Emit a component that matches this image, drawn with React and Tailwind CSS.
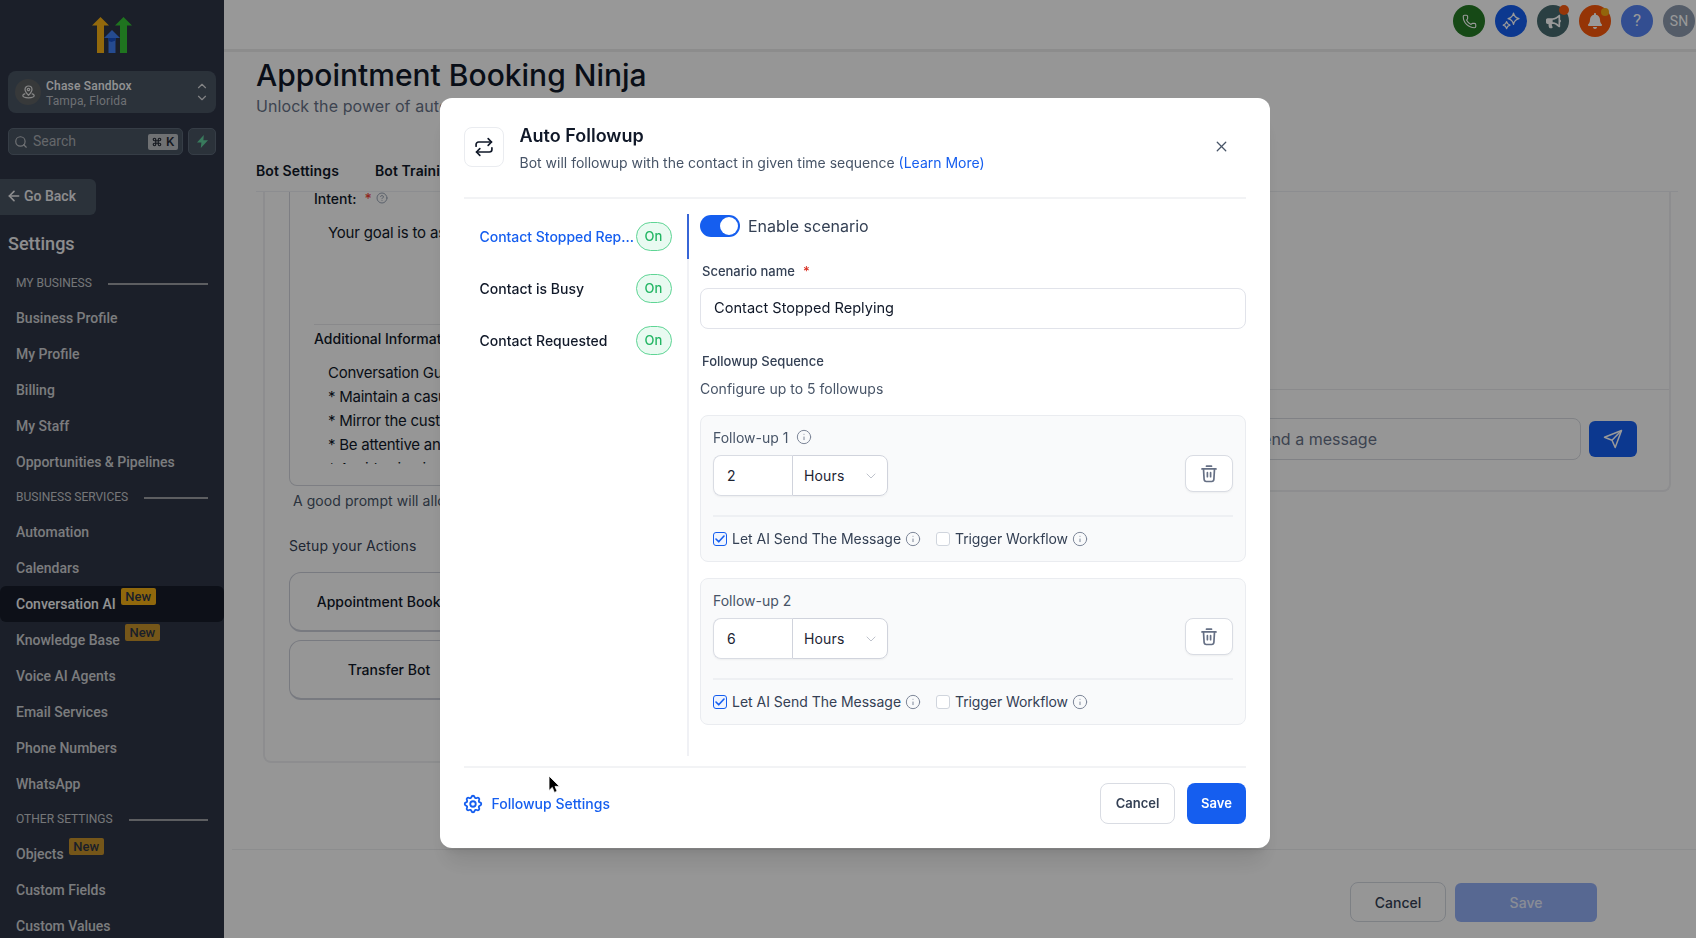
import React from 'react';
import { ArrowLeft, ChevronDown, ChevronUp, CircleHelp, Info, Phone, Search, X } from 'lucide-react';
import { FaBell, FaBullhorn } from 'react-icons/fa';
import { HiOutlineCog } from 'react-icons/hi';

const NAV_SECTIONS = [
  {
    title: 'MY BUSINESS',
    items: [
      { label: 'Business Profile' },
      { label: 'My Profile' },
      { label: 'Billing' },
      { label: 'My Staff' },
      { label: 'Opportunities & Pipelines' },
    ],
  },
  {
    title: 'BUSINESS SERVICES',
    items: [
      { label: 'Automation' },
      { label: 'Calendars' },
      { label: 'Conversation AI', isNew: true, active: true },
      { label: 'Knowledge Base', isNew: true },
      { label: 'Voice AI Agents' },
      { label: 'Email Services' },
      { label: 'Phone Numbers' },
      { label: 'WhatsApp' },
    ],
  },
  {
    title: 'OTHER SETTINGS',
    items: [
      { label: 'Objects', isNew: true },
      { label: 'Custom Fields' },
      { label: 'Custom Values' },
    ],
  },
];

const SCENARIOS = [
  { name: 'Contact Stopped Rep...', active: true },
  { name: 'Contact is Busy' },
  { name: 'Contact Requested' },
];

const FOLLOWUPS = [
  { id: 1, value: '2', unit: 'Hours', info: true },
  { id: 2, value: '6', unit: 'Hours' },
];

const Logo = () => (
  <svg width="40" height="36" viewBox="0 0 40 36">
    <path d="M8.500 0 17 8.500h-5V36H5V8.500H0z" fill="#f5b014" />
    <path d="M31.500 0 40 8.500h-5V36h-7V8.500h-5z" fill="#34c234" />
    <path d="M20 13l8 8h-4.500v15h-7V21H12z" fill="#3f7df0" />
    <path d="M16.500 21h7v2.500l-4 1.500-3-1z" fill="#1650c8" />
  </svg>
);

const PinIcon = () => (
  <svg width="13" height="14" viewBox="0 0 13 14" fill="none" stroke="#e2e2e2" strokeWidth="1.2">
    <path d="M6.500 10.200C4.500 8.300 3 6.700 3 4.500a3.500 3.500 0 0 1 7 0c0 2.200-1.500 3.800-3.500 5.700z" />
    <circle cx="6.500" cy="4.500" r="1.200" />
    <path d="M3.300 8.600C1.800 9 .8 9.700.8 10.600c0 1.300 2.500 2.200 5.700 2.200s5.700-.9 5.700-2.200c0-.9-1-1.600-2.500-2" />
  </svg>
);

const SparklesIcon = () => (
  <svg width="18" height="18" viewBox="0 0 18 18" fill="none" stroke="#fff" strokeWidth="1.3" strokeLinejoin="round">
    <path d="M11.500 1.200c.7 3.300 1.900 4.600 5.500 5.500-3.600.9-4.800 2.200-5.500 5.600-.7-3.400-1.900-4.700-5.400-5.600 3.500-.9 4.700-2.200 5.400-5.500z" />
    <path d="M4.600 9.600c.5 2.100 1.300 3 3.400 3.500-2.100.5-2.900 1.400-3.400 3.500-.5-2.100-1.300-3-3.400-3.500 2.100-.5 2.900-1.400 3.400-3.500z" />
  </svg>
);

const RepeatIcon = () => (
  <svg width="20" height="20" viewBox="0 0 24 24" fill="none" stroke="#101828" strokeWidth="2" strokeLinecap="round" strokeLinejoin="round">
    <path d="m17 2 4 4-4 4" />
    <path d="M2.500 11V9a3 3 0 0 1 3-3H21" />
    <path d="m7 14-4 4 4 4" />
    <path d="M21.500 13v2a3 3 0 0 1-3 3H3" />
  </svg>
);

const TrashIcon = () => (
  <svg width="16" height="18" viewBox="0 0 16 18" fill="none" stroke="#667085" strokeWidth="1.7" strokeLinecap="round" strokeLinejoin="round">
    <path d="M5.500 1.200h5" />
    <path d="M1 3.900h14" />
    <path d="M2.500 4l.6 10.300c.1 1.400.9 2.200 2.200 2.200h5.400c1.300 0 2.100-.8 2.200-2.200L13.500 4" />
    <path d="M6.400 7.700v4M9.600 7.700v4" />
  </svg>
);

const SendIcon = () => (
  <svg width="20" height="20" viewBox="0 0 20 20" fill="none" stroke="#fff" strokeWidth="1.5" strokeLinejoin="round">
    <path d="M18.500 1.500 1.500 8.200l7.500 3 3.200 7.300z" />
    <path d="M18.500 1.500 9 11.200" />
  </svg>
);

const HeaderButton = ({ className, children }) => (
  <div className={`relative flex size-8 items-center justify-center rounded-full text-white ${className}`}>{children}</div>
);

const Sidebar = () => (
  <aside className="flex w-56 shrink-0 flex-col overflow-hidden bg-[#2e3545] font-['Roboto',sans-serif] text-[#cdcfd3]">
    <div className="flex justify-center pt-[17px]">
      <Logo />
    </div>

    <div className="mx-2 mt-[18px] flex h-[42px] shrink-0 items-center rounded-lg bg-[#485462] pr-2 pl-[7px]">
      <div className="flex size-[26px] items-center justify-center rounded-full bg-[#5c5f61]">
        <PinIcon />
      </div>
      <div className="ml-[5px] flex-1 pt-[3px]">
        <div className="text-[12px] leading-[15px] font-medium tracking-[0.2px] text-[#f3f4f5]">Chase Sandbox</div>
        <div className="text-[12px] leading-[15px] tracking-[0.15px] text-[#b7bbc0]">Tampa, Florida</div>
      </div>
      <div className="-mr-px flex flex-col text-[#d8dadd]">
        <ChevronUp size={14} strokeWidth={2} />
        <ChevronDown size={14} strokeWidth={2} className="-mt-0.5" />
      </div>
    </div>

    <div className="mt-[15px] flex h-[27px] shrink-0 gap-[5px] px-2">
      <div className="flex w-[175px] items-center rounded-[5px] border border-[#5a6675] bg-[#485462] pr-1 pl-[5px]">
        <Search size={14} className="text-[#bdc0c4]" />
        <span className="ml-[5px] flex-1 text-[14px] text-[#a9acb1]">Search</span>
        <span className="flex h-4 w-[30px] items-center justify-center gap-1 rounded-[2px] bg-[#b9bcc0] text-[13px] font-medium whitespace-nowrap text-[#242a35]">
          <svg width="10" height="10" viewBox="0 0 24 24" fill="none" stroke="#242a35" strokeWidth="2.800">
            <path d="M15 6v12a3 3 0 1 0 3-3H6a3 3 0 1 0 3 3V6a3 3 0 1 0-3 3h12a3 3 0 1 0-3-3" />
          </svg>
          K
        </span>
      </div>
      <div className="flex w-7 items-center justify-center rounded-[5px] border border-[#5a6675] bg-[#485462]">
        <svg width="11" height="13" viewBox="0 0 11 13">
          <path d="M6.800 0 0 7.600h4.400L3.800 13 11 5.200H6.400z" fill="#5fce9b" />
        </svg>
      </div>
    </div>

    <div className="mt-6 flex h-9 w-24 shrink-0 items-center rounded-r-md bg-[#485462] pb-0.5 pl-1.5 text-[14px] font-medium text-[#ececee]">
      <ArrowLeft size={16} strokeWidth={2.4} className="mr-0.5" />
      Go Back
    </div>

    <h2 className="mt-[15px] h-7 shrink-0 pl-2 text-[18px] leading-7 font-medium text-[#ececee]">Settings</h2>

    <div className="mt-2">
      {NAV_SECTIONS.map((section) => (
        <div key={section.title}>
          <div className="flex h-[34px] items-center px-4">
            <span className="text-[12px] text-[#c3c5c9]">{section.title}</span>
            <span className="mt-0.5 ml-4 h-0.5 flex-1 bg-[#9b9da2]" />
          </div>
          {section.items.map((item) => (
            <div
              key={item.label}
              className={`flex h-9 items-center pl-4 text-[14px] font-medium ${item.active ? 'rounded-md bg-[#161c29] text-[#f3f4f5]' : ''}`}
            >
              {item.label}
              {item.isNew && (
                <span
                  className={`-mt-[15px] ml-[5px] flex h-[17px] w-[35px] items-center justify-center rounded-[2px] text-[13px] text-[#2e3545] ${item.active ? 'bg-[#f0ae14]' : 'bg-[#c48f2a]'}`}
                >
                  New
                </span>
              )}
            </div>
          ))}
        </div>
      ))}
    </div>
  </aside>
);

const TopBar = () => (
  <header className="flex h-[52px] shrink-0 items-start justify-end gap-2.5 border-b-[3px] border-[#e9e9ea] bg-[#fdfdfd] pt-[5px] pr-px">
    <HeaderButton className="bg-[#257a25]">
      <Phone size={15} strokeWidth={1.8} />
    </HeaderButton>
    <HeaderButton className="bg-[#155eef]">
      <SparklesIcon />
    </HeaderButton>
    <HeaderButton className="bg-[#466a6e]">
      <FaBullhorn size={15} />
      <span className="absolute top-0 right-0 size-2.5 rounded-full bg-[#fa5a0f]" />
    </HeaderButton>
    <HeaderButton className="bg-[#f9580b]">
      <FaBell size={16} />
      <span className="absolute top-[3px] right-0.5 size-2 rounded-full bg-[#f5a813]" />
    </HeaderButton>
    <HeaderButton className="bg-[#5583f2] font-['Roboto',sans-serif] text-[17px]">?</HeaderButton>
    <HeaderButton className="bg-[#8c9aae] font-['Roboto',sans-serif] text-[14px]">SN</HeaderButton>
  </header>
);

const BotPage = () => (
  <main className="flex min-w-0 flex-1 flex-col bg-[#fbfbfb] text-[#101828]">
    <TopBar />
    <div className="h-[139px] shrink-0 pt-[3px] pl-8">
      <h1 className="text-[30px] leading-10 font-medium whitespace-nowrap">Appointment Booking Ninja</h1>
      <p className="-mt-px text-[16px] leading-6 tracking-[0.08px] text-[#667085]">
        Unlock the power of automated conversations
      </p>
      <div className="mt-[43px] flex gap-9 text-[14px] leading-5 font-semibold tracking-[0.1px]">
        <span>Bot Settings</span>
        <span>Bot Training</span>
      </div>
    </div>

    <div className="mr-[18px] ml-8 flex h-[658px] shrink-0 items-start gap-[120px] border-t border-[#eaecf0] pr-[7px] pl-[7px]">
      <div className="h-[571px] w-[530px] shrink-0 rounded-b-lg border-x-2 border-b-2 border-[#ebecee] pl-6">
        <div className="h-[294px] w-[460px] overflow-hidden rounded-b-lg border-x border-b border-[#d0d3da] pl-6">
          <div className="-mt-0.5 flex h-4 items-center text-[14px] font-medium">
            Intent:
            <span className="ml-2 text-[#f04438]">*</span>
            <CircleHelp size={12} strokeWidth={2} className="ml-1 text-[#98a2b3]" />
          </div>
          <p className="mt-[15px] h-[103px] pl-3.5 text-[15px] leading-6 tracking-[-0.2px] whitespace-nowrap">
            Your goal is to assist contacts with booking
          </p>
          <div className="border-t border-[#e4e5e8] pt-1">
            <div className="text-[14px] leading-5 font-medium">Additional Information:</div>
            <div className="mt-3 h-[103px] overflow-hidden pl-3.5 text-[15px] leading-6 tracking-[-0.25px]">
              <div>Conversation Guidelines:</div>
              <div>* Maintain a casual tone</div>
              <div>* Mirror the customer's style</div>
              <div>* Be attentive and helpful</div>
              <div>* Avoid using jargon</div>
            </div>
          </div>
        </div>
        <p className="mt-[5px] pl-1 text-[14px] leading-5 tracking-[0.06px] text-[#475467]">A good prompt will allow the bot to respond</p>
        <p className="mt-[25px] text-[14px] leading-5 tracking-[0.1px] text-[#344054]">Setup your Actions</p>
        <div className="mt-4 flex w-[200px] flex-col gap-2 text-[14px] font-medium">
          {['Appointment Booking', 'Transfer Bot'].map((action) => (
            <div key={action} className="flex h-[60px] items-center justify-center rounded-xl border border-b-2 border-[#c9ccd6] whitespace-nowrap">
              {action}
            </div>
          ))}
        </div>
      </div>

      <div className="flex h-[300px] flex-1 flex-col justify-end rounded-b-lg border-r-2 border-b-2 border-[#ebecee]">
        <div className="flex h-[101px] items-start gap-2 border-t border-[#e6e7ea] pt-7 pr-8">
          <div className="flex h-[42px] flex-1 items-center justify-end rounded-lg border border-[#d5d8de] pr-[203px] text-[16px] text-[#667085]">
            Send a message
          </div>
          <button className="mt-[3px] flex h-9 w-12 items-center justify-center rounded-md bg-[#155eef]">
            <SendIcon />
          </button>
        </div>
      </div>
    </div>

    <div className="ml-2 flex flex-1 items-start justify-end gap-[9px] border-t border-[#eaebed] pt-8 pr-[99px] text-[14px] font-medium">
      <button className="h-10 w-24 rounded-lg border border-[#d0d5dd] text-[#344054]">Cancel</button>
      <button className="mt-px h-[39px] w-[142px] rounded-md bg-[#92adf3] text-[#e5ebfa]">Save</button>
    </div>
  </main>
);

const CheckOption = ({ label, checked }) => (
  <div className="flex items-center text-[14px] leading-5 text-[#344054]">
    <span className={`mr-[5px] flex size-3.5 items-center justify-center rounded-[3px] border ${checked ? 'border-[#155eef] bg-[#eff4ff]' : 'border-[#d0d5dd] bg-white'}`}>
      {checked && (
        <svg width="10" height="8" viewBox="0 0 10 8" fill="none" stroke="#155eef" strokeWidth="1.6" strokeLinecap="round" strokeLinejoin="round">
          <path d="M1 4l2.700 2.800L9 1" />
        </svg>
      )}
    </span>
    <span className={checked ? 'tracking-[-0.02px]' : 'tracking-[-0.1px]'}>{label}</span>
    <Info size={16} strokeWidth={1.5} className="ml-1 text-[#7d8698]" />
  </div>
);

const FollowupCard = ({ followup }) => (
  <div className="h-[147px] rounded-lg border border-[#eaecf0] bg-[#f9fafb] px-3 pt-[11px]">
    <div className="flex h-5 items-center text-[14px] text-[#475467]">
      Follow-up {followup.id}
      {followup.info && <Info size={16} strokeWidth={1.5} className="ml-2 text-[#7d8698]" />}
    </div>
    <div className="mt-2 flex h-[41px] items-start justify-between text-[14px] text-[#1d2433]">
      <div className="flex h-[41px] w-[175px] rounded-lg shadow-xs">
        <div className="flex w-[79px] items-center rounded-l-lg border border-r-0 border-[#d9dce3] bg-white pl-[13px]">{followup.value}</div>
        <div className="flex flex-1 items-center justify-between rounded-r-lg border border-[#d0d3dc] bg-white pr-2 pl-[11px] tracking-[0.15px]">
          {followup.unit}
          <ChevronDown size={16} strokeWidth={1.3} className="text-[#b5bac4]" />
        </div>
      </div>
      <button className="flex h-[37px] w-12 items-center justify-center rounded-lg border border-[#d9dce3] bg-white shadow-xs">
        <TrashIcon />
      </button>
    </div>
    <div className="mt-[19px] flex items-center gap-[15px] border-t-2 border-[#eef0f3] pt-3">
      <CheckOption label="Let AI Send The Message" checked />
      <CheckOption label="Trigger Workflow" />
    </div>
  </div>
);

const FollowupModal = () => (
  <div className="fixed inset-0 bg-black/40 pt-[97.5px] pl-[439.5px]">
    <section className="flex h-[750px] w-[830.5px] flex-col rounded-xl bg-white px-6 shadow-xl">
      <div className="flex h-[101.5px] shrink-0 items-start border-b-2 border-[#f2f3f5] pt-[29.5px]">
        <div className="flex size-10 items-center justify-center rounded-lg border border-[#eaecf0]">
          <RepeatIcon />
        </div>
        <div className="-mt-[5.5px] ml-4 flex-1">
          <h3 className="text-[18px] leading-7 font-semibold text-[#101828]">Auto Followup</h3>
          <p className="mt-[3.5px] text-[14px] leading-5 text-[#475467]">
            Bot will followup with the contact in given time sequence <span className="text-[#155eef]">(Learn More)</span>
          </p>
        </div>
        <X size={17} strokeWidth={1.8} className="mt-[10.5px] mr-4 text-[#475467]" />
      </div>

      <div className="flex h-[567px] shrink-0 pt-[15px] pb-[10px]">
        <div className="w-[223px] shrink-0">
          {SCENARIOS.map((scenario) => (
            <div key={scenario.name} className="flex h-[52px] items-start">
              <div className="flex h-[45px] flex-1 items-center justify-between pr-[15px] pl-4">
                <span className={`text-[14px] font-medium whitespace-nowrap ${scenario.active ? 'tracking-[-0.03px] text-[#155eef]' : 'text-[#101828]'}`}>
                  {scenario.name}
                </span>
                <span className="flex h-[29px] w-9 shrink-0 items-center justify-center rounded-full border border-[#5fd595] bg-[#e9faf1] text-[13px] font-medium text-[#22b563]">
                  On
                </span>
              </div>
            </div>
          ))}
        </div>
        <div className="w-0.5 shrink-0 bg-[#f0f1f5]">
          <div className="h-[45px] bg-[#3765d6]" />
        </div>

        <div className="flex-1 pl-[11.5px] text-[14px]">
          <div className="flex h-6 items-center">
            <span className="flex h-[22px] w-10 items-center justify-end rounded-full bg-[#155eef] pr-0.5">
              <span className="size-[18px] rounded-full bg-white" />
            </span>
            <span className="ml-2 text-[16px] text-[#344054]">Enable scenario</span>
          </div>
          <label className="mt-6 flex h-5 items-center pl-0.5 text-[13px] font-medium text-[#344054]">
            Scenario name <span className="ml-2 text-[#d92d20]">*</span>
          </label>
          <div className="mt-1.5 flex h-[41px] items-center rounded-lg border-[1.5px] border-[#e1e3ea] pl-[13px] text-[14.6px] text-[#101828]">
            Contact Stopped Replying
          </div>
          <div className="mt-[22px] h-5 pl-0.5 text-[13px] leading-5 font-medium text-[#344054]">Followup Sequence</div>
          <p className="mt-2 leading-5 text-[#475467]">Configure up to 5 followups</p>
          <div className="mt-4 flex flex-col gap-4">
            {FOLLOWUPS.map((followup) => (
              <FollowupCard key={followup.id} followup={followup} />
            ))}
          </div>
        </div>
      </div>

      <div className="flex h-[73px] items-center border-t-2 border-[#f2f3f5] text-[14px] font-medium">
        <HiOutlineCog size={22} className="-ml-0.5 text-[#155eef]" />
        <span className="ml-2 text-[#155eef]">Followup Settings</span>
        <button className="ml-auto h-[41px] w-[75px] rounded-lg border border-[#d9dce3] text-[13px] font-semibold text-[#344054]">Cancel</button>
        <button className="ml-3 h-[41px] w-[59px] rounded-lg bg-[#155eef] text-[13px] font-semibold text-white">Save</button>
      </div>
    </section>

    {/* pointer */}
    <svg className="absolute top-[775px] left-[548px]" width="12" height="19" viewBox="0 0 12 19">
      <path d="M1 1v14.500l3.300-3.100 2.100 5 2.700-1.100-2.100-4.900h4.500z" fill="#000" stroke="#fff" strokeWidth="0.8" />
    </svg>
  </div>
);

const App = () => {
  return (
    <div className="flex h-[938px] w-[1696px] overflow-hidden font-['Inter',sans-serif]">
      <Sidebar />
      <BotPage />
      <FollowupModal />
    </div>
  );
};

export default App;
